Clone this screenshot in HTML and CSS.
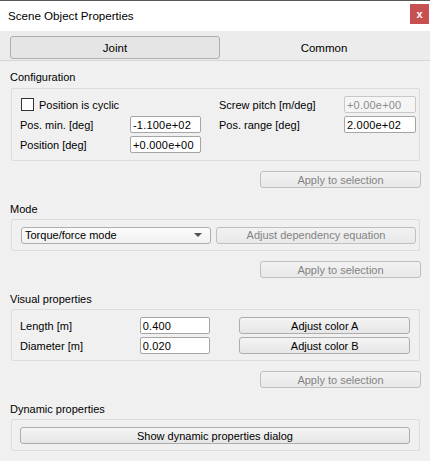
FILE: index.html
```html
<!DOCTYPE html>
<html>
<head>
<meta charset="utf-8">
<link rel="stylesheet" href="styles.css">
</head>
<body>
<div class="window">
  <div class="titlebar">
    <span class="title">Scene Object Properties</span>
    <span class="close">x</span>
  </div>
  <div class="tabs">
    <div class="tab active">Joint</div>
    <div class="tab">Common</div>
  </div>
  <div class="content">
    <div class="section first">
      <div class="sec-label">Configuration</div>
      <div class="box config">
        <div class="cfg-left">
          <div class="row check-row"><span class="checkbox"></span><span>Position is cyclic</span></div>
          <div class="row"><span class="lbl">Pos. min. [deg]</span><span class="input">-1.100e+02</span></div>
          <div class="row"><span class="lbl">Position [deg]</span><span class="input">+0.000e+00</span></div>
        </div>
        <div class="cfg-right">
          <div class="row"><span class="lbl">Screw pitch [m/deg]</span><span class="input disabled">+0.00e+00</span></div>
          <div class="row"><span class="lbl">Pos. range [deg]</span><span class="input">2.000e+02</span></div>
        </div>
      </div>
      <div class="apply-row"><span class="btn disabled apply">Apply to selection</span></div>
    </div>

    <div class="section">
      <div class="sec-label">Mode</div>
      <div class="box mode">
        <div class="combo"><span>Torque/force mode</span><span class="arrow"></span></div>
        <span class="btn disabled dep">Adjust dependency equation</span>
      </div>
      <div class="apply-row"><span class="btn disabled apply">Apply to selection</span></div>
    </div>

    <div class="section">
      <div class="sec-label">Visual properties</div>
      <div class="box visual">
        <div class="vrow"><span class="vlbl">Length [m]</span><span class="input vin">0.400</span><span class="btn color">Adjust color A</span></div>
        <div class="vrow"><span class="vlbl">Diameter [m]</span><span class="input vin">0.020</span><span class="btn color">Adjust color B</span></div>
      </div>
      <div class="apply-row"><span class="btn disabled apply">Apply to selection</span></div>
    </div>

    <div class="section">
      <div class="sec-label">Dynamic properties</div>
      <div class="box dyn">
        <span class="btn wide">Show dynamic properties dialog</span>
      </div>
    </div>
  </div>
</div>
</body>
</html>
```

FILE: styles.css
```css
html, body {
  margin: 0;
  padding: 0;
  background: #f0f0f0;
}
body {
  font-family: "Liberation Sans", Arial, sans-serif;
  font-size: 11px;
  color: #000;
}
.window {
  width: 430px;
  height: 461px;
  border-top: 1px solid #5a5a5a;
  box-sizing: border-box;
  background: #f0f0f0;
  overflow: hidden;
}
.titlebar {
  height: 30px;
  background: #fff;
  display: flex;
  align-items: center;
  justify-content: space-between;
  padding-left: 8px;
  padding-right: 1px;
}
.title {
  font-size: 11.6px;
  margin-top: -2px;
}
.close {
  width: 19px;
  height: 20px;
  background: #c75050;
  color: #fff;
  font-weight: bold;
  font-size: 11px;
  display: flex;
  align-items: center;
  justify-content: center;
  margin-top: -4px;
  line-height: 1;
}
.tabs {
  background: #ececec;
  height: 30px;
  border-bottom: 1px solid #d6d6d6;
  display: flex;
  align-items: flex-start;
  padding: 5px 2px 0 10px;
  box-sizing: border-box;
}
.tab {
  width: 209px;
  height: 23px;
  display: flex;
  align-items: center;
  justify-content: center;
  box-sizing: border-box;
  font-size: 11.5px;
}
.tab.active {
  width: 210px;
  border: 1px solid #adadad;
  border-radius: 3px;
  background: #e5e5e5;
}
.tab:not(.active) {
  flex: 1;
}
.content {
  padding: 0 9px 0 10px;
}
.section {
  display: flex;
  flex-direction: column;
}
.sec-label {
  height: 14px;
  line-height: 14px;
  margin-top: 14px;
  margin-bottom: 3px;
}
.section.first .sec-label {
  margin-top: 9px;
  margin-bottom: 4px;
}
.box {
  border: 1px solid #dcdcdc;
  border-radius: 2px;
  margin-left: 1px;
  margin-right: 1px;
  box-sizing: border-box;
}
.config {
  display: flex;
  padding: 7px 3px 7px 8px;
  height: 73px;
}
.cfg-left {
  width: 181px;
  display: flex;
  flex-direction: column;
  gap: 3px;
}
.cfg-right {
  flex: 1;
  display: flex;
  flex-direction: column;
  gap: 3px;
  padding-left: 18px;
}
.row {
  height: 17px;
  display: flex;
  align-items: center;
  justify-content: space-between;
}
.check-row {
  justify-content: flex-start;
  gap: 5px;
}
.checkbox {
  width: 13px;
  height: 13px;
  box-sizing: border-box;
  border: 1px solid #333;
  background: #fff;
  margin-left: 1px;
}
.input {
  height: 17px;
  box-sizing: border-box;
  border: 1px solid #a5a5a5;
  border-radius: 2px;
  background: #fff;
  display: flex;
  align-items: center;
  padding-left: 2px;
  letter-spacing: 0.2px;
}
.cfg-left .input {
  width: 71px;
}
.cfg-right .input {
  width: 72px;
}
.input.disabled {
  border-color: #c8c8c8;
  background: #f5f5f5;
  color: #8c8c8c;
}
.btn {
  height: 17px;
  box-sizing: border-box;
  border: 1px solid #adadad;
  border-radius: 3px;
  background: linear-gradient(#f4f4f4, #e6e6e6);
  display: flex;
  align-items: center;
  justify-content: center;
  color: #000;
}
.btn.disabled {
  border-color: #bfbfbf;
  background: linear-gradient(#f2f2f2, #e9e9e9);
  color: #838383;
}
.apply-row {
  display: flex;
  justify-content: flex-end;
  margin-top: 10px;
}
.apply {
  width: 161px;
}
.mode {
  display: flex;
  align-items: center;
  gap: 5px;
  padding: 7px 3px 7px 8px;
  height: 32px;
}
.combo {
  width: 190px;
  height: 17px;
  box-sizing: border-box;
  border: 1px solid #adadad;
  border-radius: 3px;
  background: linear-gradient(#fbfbfb, #f1f1f1);
  display: flex;
  align-items: center;
  justify-content: space-between;
  padding: 0 8px 0 3px;
  margin-left: 1px;
}
.arrow {
  width: 0;
  height: 0;
  border-left: 4px solid transparent;
  border-right: 4px solid transparent;
  border-top: 4px solid #505050;
}
.dep {
  flex: 1;
}
.visual {
  display: flex;
  flex-direction: column;
  gap: 3px;
  padding: 7px 9px 7px 8px;
  height: 52px;
}
.vrow {
  display: flex;
  align-items: center;
  height: 17px;
}
.vlbl {
  width: 120px;
}
.vin {
  width: 71px;
}
.color {
  width: 171px;
  margin-left: 29px;
}
.dyn {
  padding: 7px 9px 7px 8px;
  height: 32px;
}
.wide {
  width: 100%;
}
```
